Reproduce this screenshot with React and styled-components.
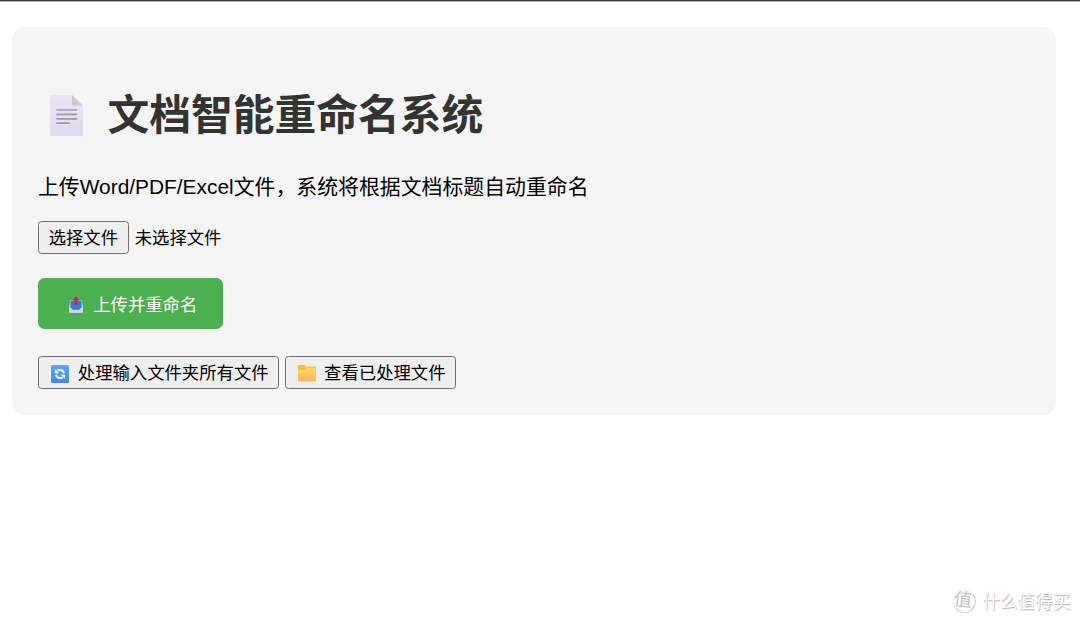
import React from 'react'
import styled, { createGlobalStyle } from 'styled-components'

const GlobalStyle = createGlobalStyle`
body {
  margin: 0;
  background: #fff;
  font-family: "Liberation Sans", "Noto Sans CJK SC", sans-serif;
}
* { box-sizing: border-box; }
`;

const Page = styled.div`
height: 623px;
border-top: 1px solid #393939;
box-shadow: inset 0 1px 0 #b5b5b5;
padding: 26.4px 24px 0 12px;
position: relative;
overflow: hidden;
`;

const Container = styled.main`
height: 387.5px;
padding: 54px 26px 26px;
border-radius: 13px;
background: #f5f5f5;
display: flex;
flex-direction: column;
align-items: flex-start;
`;

const Title = styled.h1`
display: flex;
align-items: center;
gap: 24.5px;
height: 66px;
margin: 0;
padding: 2px 0 0 12px;
font-size: 41.75px;
line-height: 66px;
font-weight: 700;
color: #333;
white-space: nowrap;

svg { margin-top: 0; }
span { padding-top: 1px; }
`;

const Description = styled.p`
height: 30px;
margin: 24.6px 0 18.9px;
font-size: 20.88px;
line-height: 30px;
color: #000;
white-space: nowrap;
`;

const Row = styled.div`
display: flex;
align-items: center;
gap: 6px;
`;

const Button = styled.button`
display: flex;
align-items: center;
justify-content: ${(props)=>props.$icon ? "flex-start" : "center"};
gap: ${(props)=>props.$gap || "8px"};
width: ${(props)=>props.$width};
height: 33px;
padding: ${(props)=>props.$icon ? "3px 0 0 11.8px" : "3px 0 0"};
border: 1px solid #707070;
border-radius: 3.5px;
background: #efefef;
color: #000;
font-family: inherit;
font-size: 17.35px;
line-height: 25px;
white-space: nowrap;
`;

const UploadButton = styled(Button)`
height: 51.5px;
margin: 24.4px 0 26.6px;
padding: 3px 0 0 30px;
border: none;
border-radius: 6.5px;
background: #4caf50;
color: #fff;
`;

const FileStatus = styled.span`
padding-top: 3px;
font-size: 17.35px;
line-height: 25px;
color: #000;
`;

const Watermark = styled.div`
position: absolute;
right: 9.5px;
bottom: 8.5px;
display: flex;
align-items: center;
gap: 6.5px;
font-size: 17.7px;
line-height: 26px;
color: #fff;
text-shadow: 0.7px 0.7px 0.8px #b0b0b0, 0 0 1px #d5d5d5;
white-space: nowrap;
`;

const Badge = styled.span`
width: 23px;
height: 23px;
border: 1px solid #eee;
border-right-color: #ccc;
border-bottom-color: #ccc;
border-radius: 50%;
font-size: 18px;
line-height: 19px;
text-align: center;
color: #c4c4c4;
text-indent: -3px;
text-shadow: none;
transform: rotate(6deg);
`;

const DocumentIcon = () => (
  <svg width="33" height="41" viewBox="0 0 33 41">
    <defs>
      <linearGradient id="paper" x1="0" y1="0" x2="0" y2="1">
        <stop offset="0" stopColor="#ebe4f4" />
        <stop offset="1" stopColor="#e2d8ef" />
      </linearGradient>
      <linearGradient id="fold" x1="0" y1="1" x2="1" y2="0">
        <stop offset="0" stopColor="#c9c1cd" />
        <stop offset="1" stopColor="#dcd7df" />
      </linearGradient>
    </defs>
    <path d="M1.5 0H22L33 10.5V39.5Q33 41 31.5 41H1.5Q0 41 0 39.5V1.5Q0 0 1.5 0Z" fill="url(#paper)" />
    <path d="M22 0L33 10.5H23.2Q22 10.5 22 9.3Z" fill="url(#fold)" />
    <path d="M7 15H26.4M7 19.4H26.4M7 23.8H26.4M7 28.2H19" stroke="#a098a6" strokeWidth="1.7" strokeLinecap="round" />
  </svg>
)

const OutboxIcon = () => (
  <svg width="16" height="18" viewBox="0 0 16 18">
    <path d="M2 4.5H14L15 12V15.5Q15 17 13.5 17H2.5Q1 17 1 15.5V12Z" fill="#cbbfe0" />
    <path d="M2.6 5H13.4V13.8H2.6Z" fill="#1b84dc" />
    <path d="M1 12H3.5L5.2 14.2H10.8L12.5 12H15V15.5Q15 17 13.5 17H2.5Q1 17 1 15.5Z" fill="#d9cee6" />
    <path d="M8 .2L11.5 4.2H9.6V9.2H6.4V4.2H4.5Z" fill="#d9214f" />
  </svg>
)

const RefreshIcon = () => (
  <svg width="18" height="18" viewBox="0 0 18 18">
    <defs>
      <linearGradient id="tile" x1="0" y1="0" x2="0" y2="1">
        <stop offset="0" stopColor="#58a8fb" />
        <stop offset="1" stopColor="#4684ea" />
      </linearGradient>
    </defs>
    <rect width="18" height="18" rx="1.5" fill="url(#tile)" />
    <path d="M6.3 5.5Q11.5 3.6 13.2 8.1M11.7 12.5Q6.5 14.4 4.8 9.9" fill="none" stroke="#eef5ff" strokeWidth="1.9" />
    <path d="M3.9 4V8.6H8.5ZM14.1 14V9.4H9.5Z" fill="#eef5ff" />
  </svg>
)

const FolderIcon = () => (
  <svg width="18" height="17" viewBox="0 0 18 17">
    <defs>
      <linearGradient id="folder" x1="0" y1="0" x2="0" y2="1">
        <stop offset="0" stopColor="#ffda5b" />
        <stop offset="1" stopColor="#ffb464" />
      </linearGradient>
    </defs>
    <path d="M0 1.2Q0 0 1.2 0H6.3L8.3 1.6H16.8Q18 1.6 18 2.8V12H0Z" fill="#f7bb47" />
    <path d="M0 4.8H6.5L8.5 3H16.8Q18 3 18 4.2V15.3Q18 16.5 16.8 16.5H1.2Q0 16.5 0 15.3Z" fill="url(#folder)" />
  </svg>
)

const App = () => {
  return (
    <>
      <GlobalStyle />
      <Page>
        <Container>
          <Title><DocumentIcon /><span>文档智能重命名系统</span></Title>
          <Description>上传Word/PDF/Excel文件，系统将根据文档标题自动重命名</Description>
          <Row>
            <Button $width="90.7px">选择文件</Button>
            <FileStatus>未选择文件</FileStatus>
          </Row>
          <UploadButton $icon $width="185.2px" $gap="9.2px"><OutboxIcon />上传并重命名</UploadButton>
          <Row>
            <Button $icon $width="240.8px" $gap="9px"><RefreshIcon />处理输入文件夹所有文件</Button>
            <Button $icon $width="171.4px" $gap="8.5px"><FolderIcon />查看已处理文件</Button>
          </Row>
        </Container>
        <Watermark><Badge>值</Badge><span>什么值得买</span></Watermark>
      </Page>
    </>
  )
}

export default App
